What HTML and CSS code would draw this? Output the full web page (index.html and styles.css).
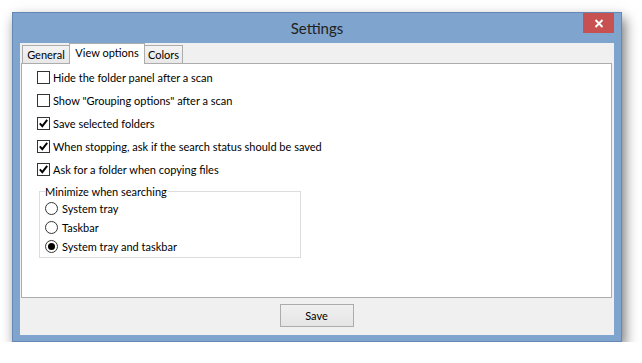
FILE: index.html
```html
<!DOCTYPE html>
<html lang="en">
<head>
    <meta charset="UTF-8">
    <title>Settings</title>
    <link rel="stylesheet" href="styles.css">
</head>
<body>
    <div class="window">
        <div class="titlebar">
            <span class="title">Settings</span>
            <button class="close-button" aria-label="Close">
                <svg width="10" height="9" viewBox="0 0 10 9">
                    <path d="M1.5 1 L8.5 8 M8.5 1 L1.5 8" stroke="#fff" stroke-width="1.9" fill="none"/>
                </svg>
            </button>
        </div>
        <div class="client">
            <div class="tabs">
                <div class="tab tab-general">General</div>
                <div class="tab active">View options</div>
                <div class="tab tab-colors">Colors</div>
            </div>
            <div class="panel">
                <label class="option"><span class="checkbox"></span>Hide the folder panel after a scan</label>
                <label class="option"><span class="checkbox"></span>Show "Grouping options" after a scan</label>
                <label class="option"><span class="checkbox checked"><svg width="11" height="11" viewBox="0 0 11 11"><path d="M1.8 5.4 L4.3 8.2 L9.2 1.8" stroke="#000" stroke-width="1.9" fill="none"/></svg></span>Save selected folders</label>
                <label class="option"><span class="checkbox checked"><svg width="11" height="11" viewBox="0 0 11 11"><path d="M1.8 5.4 L4.3 8.2 L9.2 1.8" stroke="#000" stroke-width="1.9" fill="none"/></svg></span>When stopping, ask if the search status should be saved</label>
                <label class="option"><span class="checkbox checked"><svg width="11" height="11" viewBox="0 0 11 11"><path d="M1.8 5.4 L4.3 8.2 L9.2 1.8" stroke="#000" stroke-width="1.9" fill="none"/></svg></span>Ask for a folder when copying files</label>

                <fieldset class="group">
                    <legend>Minimize when searching</legend>
                    <label class="radio-option"><span class="radio"></span>System tray</label>
                    <label class="radio-option"><span class="radio"></span>Taskbar</label>
                    <label class="radio-option"><span class="radio selected"></span>System tray and taskbar</label>
                </fieldset>
            </div>
            <div class="footer">
                <button class="save-button">Save</button>
            </div>
        </div>
    </div>
</body>
</html>
```

FILE: styles.css
```css
:root {
    --frame-color: #7fa4ce;
    --frame-edge: #6488b3;
    --client-bg: #f0f0f0;
    --control-border: #acacac;
    --text-color: #000;
}

* {
    margin: 0;
    padding: 0;
    box-sizing: border-box;
}

body {
    font-family: 'Lato', 'Liberation Sans', sans-serif;
    font-size: 11px;
    color: var(--text-color);
    background: #fff;
    padding: 12px 0 0 12px;
}

.window {
    width: 610px;
    height: 330px;
    background: var(--frame-color);
    border: 1px solid var(--frame-edge);
    padding: 0 7px 6px 7px;
    display: flex;
    flex-direction: column;
    box-shadow: 3px 6px 12px rgba(0, 0, 0, 0.55);
}

.titlebar {
    height: 30px;
    display: grid;
    grid-template-columns: 1fr auto 1fr;
}

.title {
    grid-column: 2;
    font-size: 15px;
    color: #222;
    line-height: 30px;
}

.close-button {
    grid-column: 3;
    justify-self: end;
    width: 31px;
    height: 20px;
    border: none;
    background: #c75050;
    display: flex;
    align-items: center;
    justify-content: center;
}

.client {
    height: 292px;
    background: var(--client-bg);
    padding-left: 1px;
    display: flex;
    flex-direction: column;
}

/* tab strip */
.tabs {
    display: flex;
    align-items: flex-end;
    height: 20px;
}

.tab {
    height: 18px;
    border: 1px solid var(--control-border);
    border-bottom: none;
    background: linear-gradient(#f3f3f3, #e8e8e8);
    display: flex;
    align-items: center;
    justify-content: center;
    padding-bottom: 1px;
}

.tab-general {
    width: 48px;
    margin-left: 1px;
}

.tab-colors {
    width: 39px;
    margin-left: -1px;
}

.tab.active {
    width: 76px;
    height: 21px;
    margin-left: -1px;
    margin-bottom: -1px;
    padding-bottom: 4px;
    background: #fff;
    position: relative;
}

.panel {
    height: 235px;
    margin-right: 2px;
    background: #fff;
    border: 1px solid var(--control-border);
    padding: 2px 0 0 15px;
}

.option {
    height: 23px;
    display: flex;
    align-items: center;
}

.checkbox {
    width: 13px;
    height: 13px;
    border: 1px solid #333;
    background: #fff;
    margin-right: 3px;
    display: flex;
    align-items: center;
    justify-content: center;
}

.group {
    width: 262px;
    margin: 3px 0 0 2px;
    border: 1px solid #dcdcdc;
    padding: 0 0 1px 5px;
}

.group legend {
    line-height: 15px;
    padding: 0 1px 0 0;
}

.radio-option {
    height: 19px;
    display: flex;
    align-items: center;
}

.radio {
    width: 13px;
    height: 13px;
    border: 1px solid #333;
    border-radius: 50%;
    background: #fff;
    margin-right: 4px;
    display: flex;
    align-items: center;
    justify-content: center;
}

.radio.selected::after {
    content: '';
    width: 7px;
    height: 7px;
    border-radius: 50%;
    background: #000;
}

.footer {
    flex: 1;
    display: flex;
    justify-content: center;
    padding: 6px 2px 0 0;
}

.save-button {
    width: 74px;
    height: 23px;
    border: 1px solid var(--control-border);
    background: linear-gradient(#f0f0f0, #e5e5e5);
    font-family: inherit;
    font-size: 11px;
    color: var(--text-color);
}
```
